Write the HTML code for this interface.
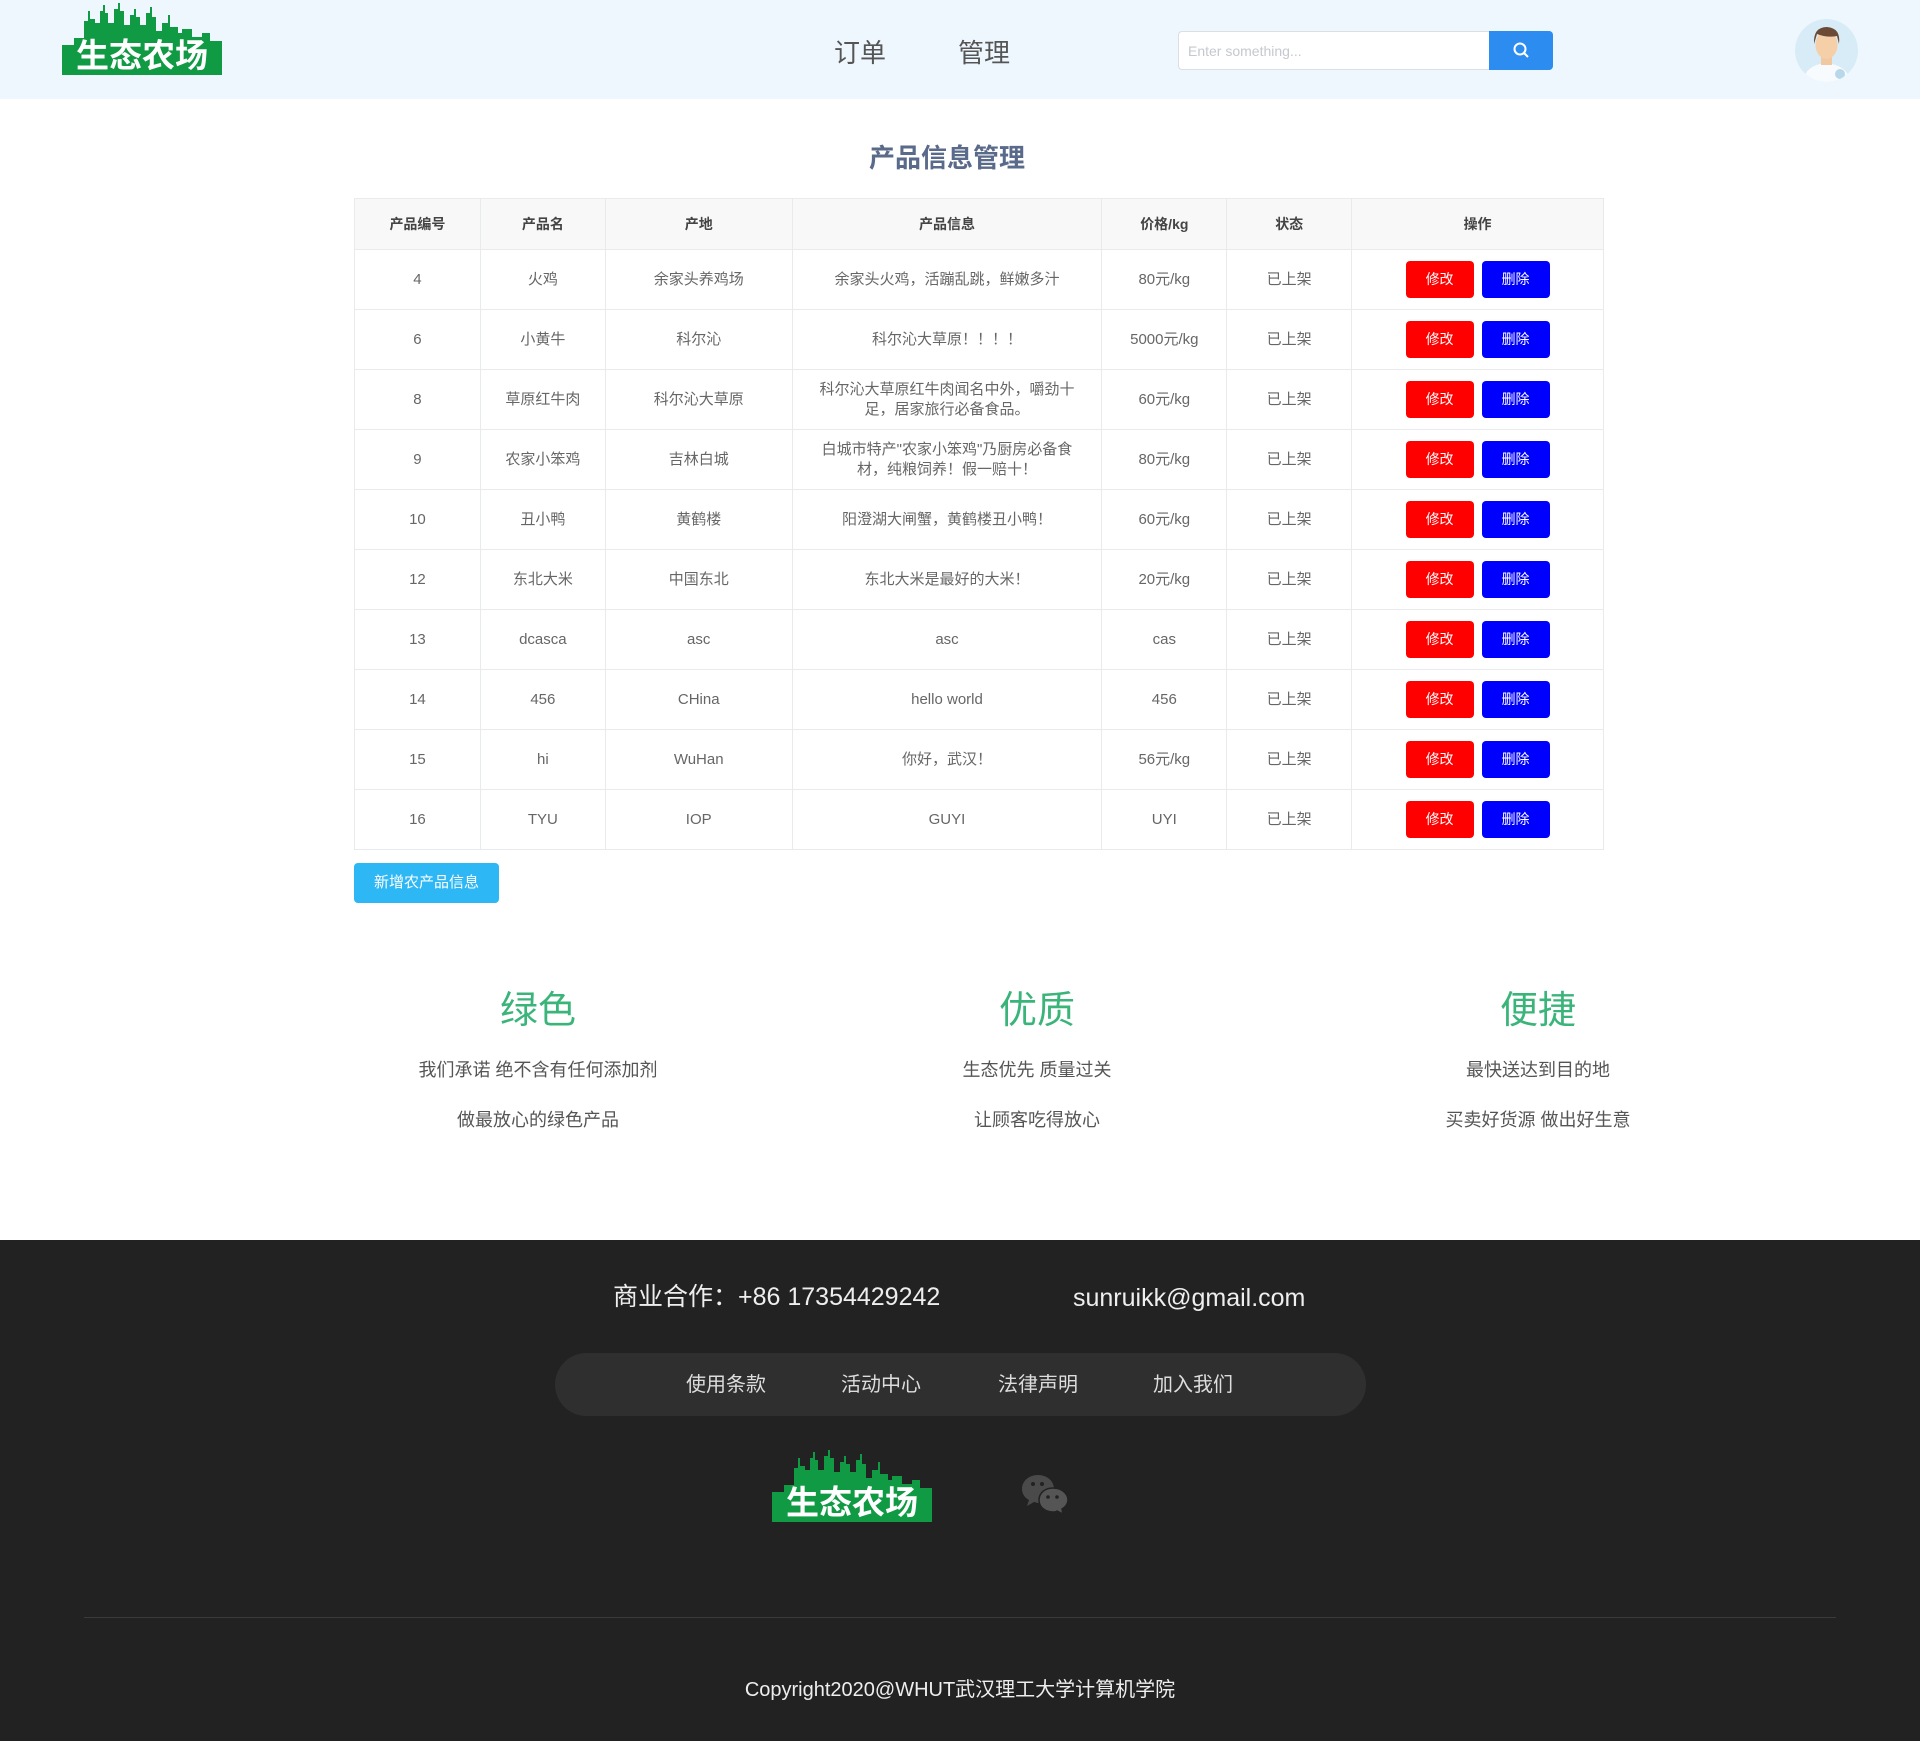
<!DOCTYPE html>
<html><head><meta charset="utf-8"><style>
*{margin:0;padding:0;box-sizing:border-box}
body{width:1920px;height:1741px;position:relative;background:#fff;font-family:"Liberation Sans","Noto Sans CJK SC",sans-serif;overflow:hidden}
.abs{position:absolute}
.hdr{left:0;top:0;width:1920px;height:99px;background:#eef7fe}
.nav{font-size:26px;color:#555;top:33px}
.search{left:1178px;top:31px;width:312px;height:39px;border:1px solid #dcdee2;border-right:none;border-radius:4px 0 0 4px;background:#fff;font-size:14px;color:#c5c8ce;padding:11px 9px}
.sbtn{left:1489px;top:31px;width:64px;height:39px;background:#2d8cf0;border-radius:0 4px 4px 0}
h1{position:absolute;left:0;width:1894px;text-align:center;top:138px;font-size:26px;color:#5a6a8a;font-weight:bold}
table{position:absolute;left:354px;top:198px;width:1250px;border-collapse:collapse;font-size:15px;color:#666}
td,th{border:1px solid #e8eaec;text-align:center;height:60px;line-height:20px}
th{height:51px;background:#f8f8f9;color:#444;font-weight:bold;font-size:14px}
.b{display:inline-block;width:68px;height:37px;line-height:37px;color:#fff;border-radius:4px;font-size:14px;margin:0 4px}
.add{left:354px;top:863px;width:145px;height:40px;background:#2db7f5;color:#fff;border-radius:4px;font-size:15px;text-align:center;line-height:40px}
.ft{text-align:center;width:400px}
.ft .t{font-size:38px;color:#3bb47a;}
.ft p{font-size:18px;color:#555;}
.foot{left:0;top:1240px;width:1920px;height:501px;background:#222}
.pill{left:555px;top:1353px;width:811px;height:63px;background:#2f2f2f;border-radius:32px}
.fl{font-size:20px;color:#ddd;top:1368px}
</style></head><body>
<div class="abs hdr"></div>
<svg class="abs" style="left:62px;top:3px" width="160" height="72" viewBox="0 0 160 72">
<path fill="#0f9a43" d="M0 42H12V35H22V18H26V8H28V16H33V20H38V8H41V2H43V10H46V20H52V6H56V0H58V8H62V22H68V12H72V6H74V14H78V22H84V10H88V4H90V14H94V28H100V20H106V12H108V24H116V30H120V26H130V34H140V30H148V38H160V72H0Z"/>
<text x="80" y="64" text-anchor="middle" fill="#fff" font-size="33" font-weight="bold" font-family="Noto Sans CJK SC,sans-serif">生态农场</text>
</svg>
<div class="abs nav" style="left:834px">订单</div>
<div class="abs nav" style="left:958px">管理</div>
<div class="abs search">Enter something...</div>
<div class="abs sbtn"><svg width="64" height="39" viewBox="0 0 64 39"><circle cx="31" cy="18" r="5.5" fill="none" stroke="#fff" stroke-width="2"/><path d="M35 22L39 26" stroke="#fff" stroke-width="2"/></svg></div>
<svg class="abs" style="left:1795px;top:19px" width="63" height="63" viewBox="0 0 63 63"><defs><clipPath id="c"><circle cx="31.5" cy="31.5" r="31.5"/></clipPath></defs><circle cx="31.5" cy="31.5" r="31.5" fill="#d8ecf8"/><g clip-path="url(#c)"><path d="M8 63Q10 46 31 44Q52 46 56 63Z" fill="#f7fbfd"/><rect x="26" y="36" width="11" height="10" fill="#f0c9a3"/><ellipse cx="31.5" cy="26" rx="11" ry="14" fill="#f5cfa8"/><path d="M19 25Q18 8 32 8Q46 9 44 25L42 17Q32 19 22 15Z" fill="#6b4a36"/><circle cx="45" cy="55" r="5" fill="#b8d8ea"/></g></svg>
<h1>产品信息管理</h1>
<table>
<colgroup><col style="width:126px"><col style="width:125px"><col style="width:187px"><col style="width:310px"><col style="width:125px"><col style="width:125px"><col style="width:252px"></colgroup>
<tr><th>产品编号</th><th>产品名</th><th>产地</th><th>产品信息</th><th>价格/kg</th><th>状态</th><th>操作</th></tr>
<tr><td>4</td><td>火鸡</td><td>余家头养鸡场</td><td>余家头火鸡，活蹦乱跳，鲜嫩多汁</td><td>80元/kg</td><td>已上架</td><td><span class="b" style="background:#f00">修改</span><span class="b" style="background:#00f">删除</span></td></tr>
<tr><td>6</td><td>小黄牛</td><td>科尔沁</td><td>科尔沁大草原！！！！</td><td>5000元/kg</td><td>已上架</td><td><span class="b" style="background:#f00">修改</span><span class="b" style="background:#00f">删除</span></td></tr>
<tr><td>8</td><td>草原红牛肉</td><td>科尔沁大草原</td><td>科尔沁大草原红牛肉闻名中外，嚼劲十<br>足，居家旅行必备食品。</td><td>60元/kg</td><td>已上架</td><td><span class="b" style="background:#f00">修改</span><span class="b" style="background:#00f">删除</span></td></tr>
<tr><td>9</td><td>农家小笨鸡</td><td>吉林白城</td><td>白城市特产"农家小笨鸡"乃厨房必备食<br>材，纯粮饲养！假一赔十！</td><td>80元/kg</td><td>已上架</td><td><span class="b" style="background:#f00">修改</span><span class="b" style="background:#00f">删除</span></td></tr>
<tr><td>10</td><td>丑小鸭</td><td>黄鹤楼</td><td>阳澄湖大闸蟹，黄鹤楼丑小鸭！</td><td>60元/kg</td><td>已上架</td><td><span class="b" style="background:#f00">修改</span><span class="b" style="background:#00f">删除</span></td></tr>
<tr><td>12</td><td>东北大米</td><td>中国东北</td><td>东北大米是最好的大米！</td><td>20元/kg</td><td>已上架</td><td><span class="b" style="background:#f00">修改</span><span class="b" style="background:#00f">删除</span></td></tr>
<tr><td>13</td><td>dcasca</td><td>asc</td><td>asc</td><td>cas</td><td>已上架</td><td><span class="b" style="background:#f00">修改</span><span class="b" style="background:#00f">删除</span></td></tr>
<tr><td>14</td><td>456</td><td>CHina</td><td>hello world</td><td>456</td><td>已上架</td><td><span class="b" style="background:#f00">修改</span><span class="b" style="background:#00f">删除</span></td></tr>
<tr><td>15</td><td>hi</td><td>WuHan</td><td>你好，武汉！</td><td>56元/kg</td><td>已上架</td><td><span class="b" style="background:#f00">修改</span><span class="b" style="background:#00f">删除</span></td></tr>
<tr><td>16</td><td>TYU</td><td>IOP</td><td>GUYI</td><td>UYI</td><td>已上架</td><td><span class="b" style="background:#f00">修改</span><span class="b" style="background:#00f">删除</span></td></tr>
</table>
<div class="abs add">新增农产品信息</div>
<div class="abs ft" style="left:338px;top:979px"><div class="t">绿色</div><p style="margin-top:22px">我们承诺 绝不含有任何添加剂</p><p style="margin-top:24px">做最放心的绿色产品</p></div>
<div class="abs ft" style="left:837px;top:979px"><div class="t">优质</div><p style="margin-top:22px">生态优先 质量过关</p><p style="margin-top:24px">让顾客吃得放心</p></div>
<div class="abs ft" style="left:1338px;top:979px"><div class="t">便捷</div><p style="margin-top:22px">最快送达到目的地</p><p style="margin-top:24px">买卖好货源 做出好生意</p></div>
<div class="abs foot"></div>
<div class="abs" style="left:613px;top:1277px;font-size:25px;color:#eee">商业合作：+86 17354429242</div>
<div class="abs" style="left:1073px;top:1284px;font-size:25px;color:#eee">sunruikk@gmail.com</div>
<div class="abs pill"></div>
<div class="abs fl" style="left:686px">使用条款</div>
<div class="abs fl" style="left:841px">活动中心</div>
<div class="abs fl" style="left:998px">法律声明</div>
<div class="abs fl" style="left:1153px">加入我们</div>
<svg class="abs" style="left:772px;top:1450px" width="160" height="72" viewBox="0 0 160 72">
<path fill="#0f9a43" d="M0 42H12V35H22V18H26V8H28V16H33V20H38V8H41V2H43V10H46V20H52V6H56V0H58V8H62V22H68V12H72V6H74V14H78V22H84V10H88V4H90V14H94V28H100V20H106V12H108V24H116V30H120V26H130V34H140V30H148V38H160V72H0Z"/>
<text x="80" y="64" text-anchor="middle" fill="#fff" font-size="33" font-weight="bold" font-family="Noto Sans CJK SC,sans-serif">生态农场</text>
</svg>
<svg class="abs" style="left:1022px;top:1475px" width="46" height="40" viewBox="0 0 46 40"><path d="M16 0C7 0 0 6 0 14c0 5 3 9 7 11l-2 6 7-4c1 0 3 1 4 1C25 28 32 22 32 14S25 0 16 0Z" fill="#4a4a4a"/><path d="M31 13c-8 0-14 5-14 12s6 12 14 12c1 0 3 0 4-1l6 3-1-5c4-2 6-6 6-9 0-7-7-12-15-12Z" fill="#555" stroke="#222" stroke-width="1.5"/><circle cx="11" cy="9" r="2" fill="#222"/><circle cx="20" cy="9" r="2" fill="#222"/><circle cx="26" cy="22" r="1.8" fill="#222"/><circle cx="35" cy="22" r="1.8" fill="#222"/></svg>
<div class="abs" style="left:84px;top:1617px;width:1752px;height:1px;background:#3a3a3a"></div>
<div class="abs" style="left:0;width:1920px;text-align:center;top:1673px;font-size:20px;color:#eee">Copyright2020@WHUT武汉理工大学计算机学院</div>
</body></html>
